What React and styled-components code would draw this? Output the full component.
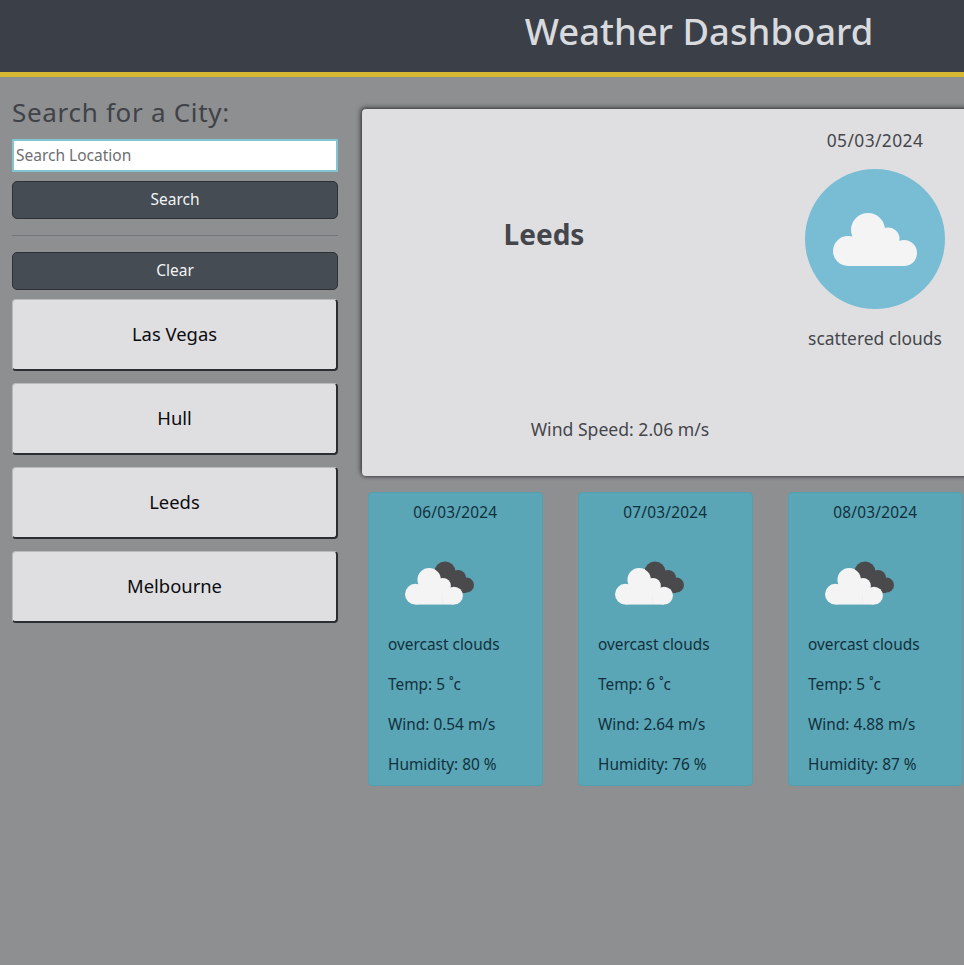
import React from "react";
import styled, { createGlobalStyle } from "styled-components";

const Global = createGlobalStyle`
  html, body { margin: 0; padding: 0; background: #8e8f91; }
  body { font-family: "Noto Sans", "Open Sans", sans-serif; overflow: hidden; }
  * { box-sizing: border-box; }
`;

const Page = styled.div`
  width: 964px;
  height: 965px;
  overflow: hidden;
  background: #8e8f91;
`;
const Header = styled.header`
  width: 1398px;
  height: 77px;
  background: #3a3f48;
  border-bottom: 5px solid #d6b731;
  display: flex;
  align-items: center;
  justify-content: center;
  padding-bottom: 10px;
`;
const Title = styled.h1`
  margin: 0;
  font-size: 36.4px;
  line-height: 60px;
  font-weight: 500;
  color: #d9dadd;
`;
const Body = styled.main`
  display: flex;
  width: 1100px;
  padding-left: 12px;
`;
const Sidebar = styled.aside`
  width: 326px;
  flex: none;
  padding-top: 17px;
  display: flex;
  flex-direction: column;
`;
const SearchTitle = styled.h2`
  margin: 0 0 9px;
  font-size: 26px;
  line-height: 36px;
  font-weight: 400;
  letter-spacing: 0.7px;
  color: #3f4247;
`;
const SearchInput = styled.input`
  height: 33px;
  width: 100%;
  border: 2px solid #82c5d2;
  background: #fff;
  padding: 0 2px 2px;
  font: 15.5px "Noto Sans", sans-serif;
  outline: none;
  &::placeholder { color: #6d6f72; opacity: 1; }
`;
const ActionButton = styled.button`
  height: 38px;
  width: 100%;
  margin-top: ${(p) => p.$top}px;
  padding: 0 0 2px;
  background: #454c54;
  border: 1px solid #2e3136;
  border-radius: 5px;
  color: #f2f3f4;
  font: 15.5px "Noto Sans", sans-serif;
`;
const Divider = styled.hr`
  width: 100%;
  height: 1px;
  margin: 16px 0 0;
  border: 0;
  background: #74757a;
`;
const CityList = styled.div`
  display: flex;
  flex-direction: column;
  gap: 12px;
  margin-top: 9px;
`;
const CityButton = styled.button`
  height: 72px;
  width: 100%;
  padding: 0 0 2px;
  background: #dfdfe2;
  border: 1px solid #b9babc;
  border-right: 2px solid #2c2d30;
  border-bottom: 2px solid #2c2d30;
  border-radius: 4px;
  color: #0c0c0e;
  font: 18.4px "Noto Sans", sans-serif;
`;
const Content = styled.section`
  margin-left: 24px;
  padding-top: 32px;
  width: 640px;
  flex: none;
`;
const MainCard = styled.article`
  width: 620px;
  height: 367px;
  background: #dfdfe2;
  border-radius: 4px;
  box-shadow: -1px -1px 5px #2f3033, 1px 1px 3px #5c5d60;
  padding: 20px 17px 36px 0;
  display: flex;
  flex-direction: column;
  color: #44464b;
`;
const MainTop = styled.div`
  display: flex;
  justify-content: space-between;
`;
const CityName = styled.h3`
  width: 364px;
  margin: 87px 0 0;
  text-align: center;
  font-size: 28px;
  line-height: 36px;
  font-weight: 700;
`;
const Today = styled.div`
  width: 180px;
  display: flex;
  flex-direction: column;
  align-items: center;
  font-size: 17.4px;
  line-height: 22px;
  gap: 18px;
`;
const DateText = styled.div`
  letter-spacing: 0.4px;
`;
const IconDisc = styled.div`
  width: 140px;
  height: 140px;
  border-radius: 50%;
  background: #78bdd3;
  display: flex;
  align-items: center;
  justify-content: center;
`;
const WindLine = styled.div`
  width: 516px;
  margin-top: auto;
  text-align: center;
  font-size: 17.6px;
  line-height: 22px;
`;
const ForecastRow = styled.div`
  display: flex;
  gap: 35.5px;
  margin-top: 16px;
  padding-left: 6px;
`;
const ForecastCard = styled.article`
  width: 174.5px;
  height: 294px;
  flex: none;
  background: #5aa5b6;
  border: 1px solid #53a0b1;
  border-radius: 4px;
  padding: 10px 0 0 19px;
  color: #12303c;
  font-size: 15.4px;
  line-height: 20px;
`;
const ForecastDate = styled.div`
  margin-left: -19px;
  text-align: center;
  letter-spacing: 0.2px;
`;
const ForecastIcon = styled.svg`
  display: block;
  margin: 38px 0 30px 16px;
`;
const ForecastLine = styled.p`
  margin: 0 0 20px;
`;

const Cloud = ({ fill }) => (
  <g fill={fill}>
    <circle cx="15" cy="38" r="15" />
    <circle cx="35" cy="17" r="17" />
    <circle cx="55" cy="26" r="11.5" />
    <circle cx="71" cy="40" r="13" />
    <rect x="15" y="24" width="40" height="29" />
    <rect x="55" y="32" width="16" height="21" />
  </g>
);

const BigCloud = () => (
  <svg width="84" height="53" viewBox="0 0 84 53" aria-hidden="true">
    <Cloud fill="#f4f4f5" />
  </svg>
);

const SmallClouds = () => (
  <ForecastIcon width="71" height="44" viewBox="0 0 71 44" aria-hidden="true">
    <g fill="#4a4a4d">
      <circle cx="41" cy="11" r="10.5" />
      <circle cx="54" cy="17" r="8" />
      <circle cx="62.5" cy="24" r="7.5" />
      <rect x="36" y="20" width="26" height="12" />
    </g>
    <g transform="translate(1 7) scale(0.69 0.69)">
      <Cloud fill="#f4f4f5" />
    </g>
  </ForecastIcon>
);

const cities = ["Las Vegas", "Hull", "Leeds", "Melbourne"];
const forecast = [
  { date: "06/03/2024", temp: 5, wind: "0.54", hum: 80 },
  { date: "07/03/2024", temp: 6, wind: "2.64", hum: 76 },
  { date: "08/03/2024", temp: 5, wind: "4.88", hum: 87 },
];

export default function App() {
  return (
    <Page>
      <Global />
      <Header>
        <Title>Weather Dashboard</Title>
      </Header>
      <Body>
        <Sidebar>
          <SearchTitle>Search for a City:</SearchTitle>
          <SearchInput placeholder="Search Location" />
          <ActionButton $top={9}>Search</ActionButton>
          <Divider />
          <ActionButton $top={16}>Clear</ActionButton>
          <CityList>
            {cities.map((c) => (
              <CityButton key={c}>{c}</CityButton>
            ))}
          </CityList>
        </Sidebar>
        <Content>
          <MainCard>
            <MainTop>
              <CityName>Leeds</CityName>
              <Today>
                <DateText>05/03/2024</DateText>
                <IconDisc>
                  <BigCloud />
                </IconDisc>
                <div>scattered clouds</div>
              </Today>
            </MainTop>
            <WindLine>Wind Speed: 2.06 m/s</WindLine>
          </MainCard>
          <ForecastRow>
            {forecast.map((f) => (
              <ForecastCard key={f.date}>
                <ForecastDate>{f.date}</ForecastDate>
                <SmallClouds />
                <ForecastLine>overcast clouds</ForecastLine>
                <ForecastLine>Temp: {f.temp} ˚c</ForecastLine>
                <ForecastLine>Wind: {f.wind} m/s</ForecastLine>
                <ForecastLine>Humidity: {f.hum} %</ForecastLine>
              </ForecastCard>
            ))}
          </ForecastRow>
        </Content>
      </Body>
    </Page>
  );
}
